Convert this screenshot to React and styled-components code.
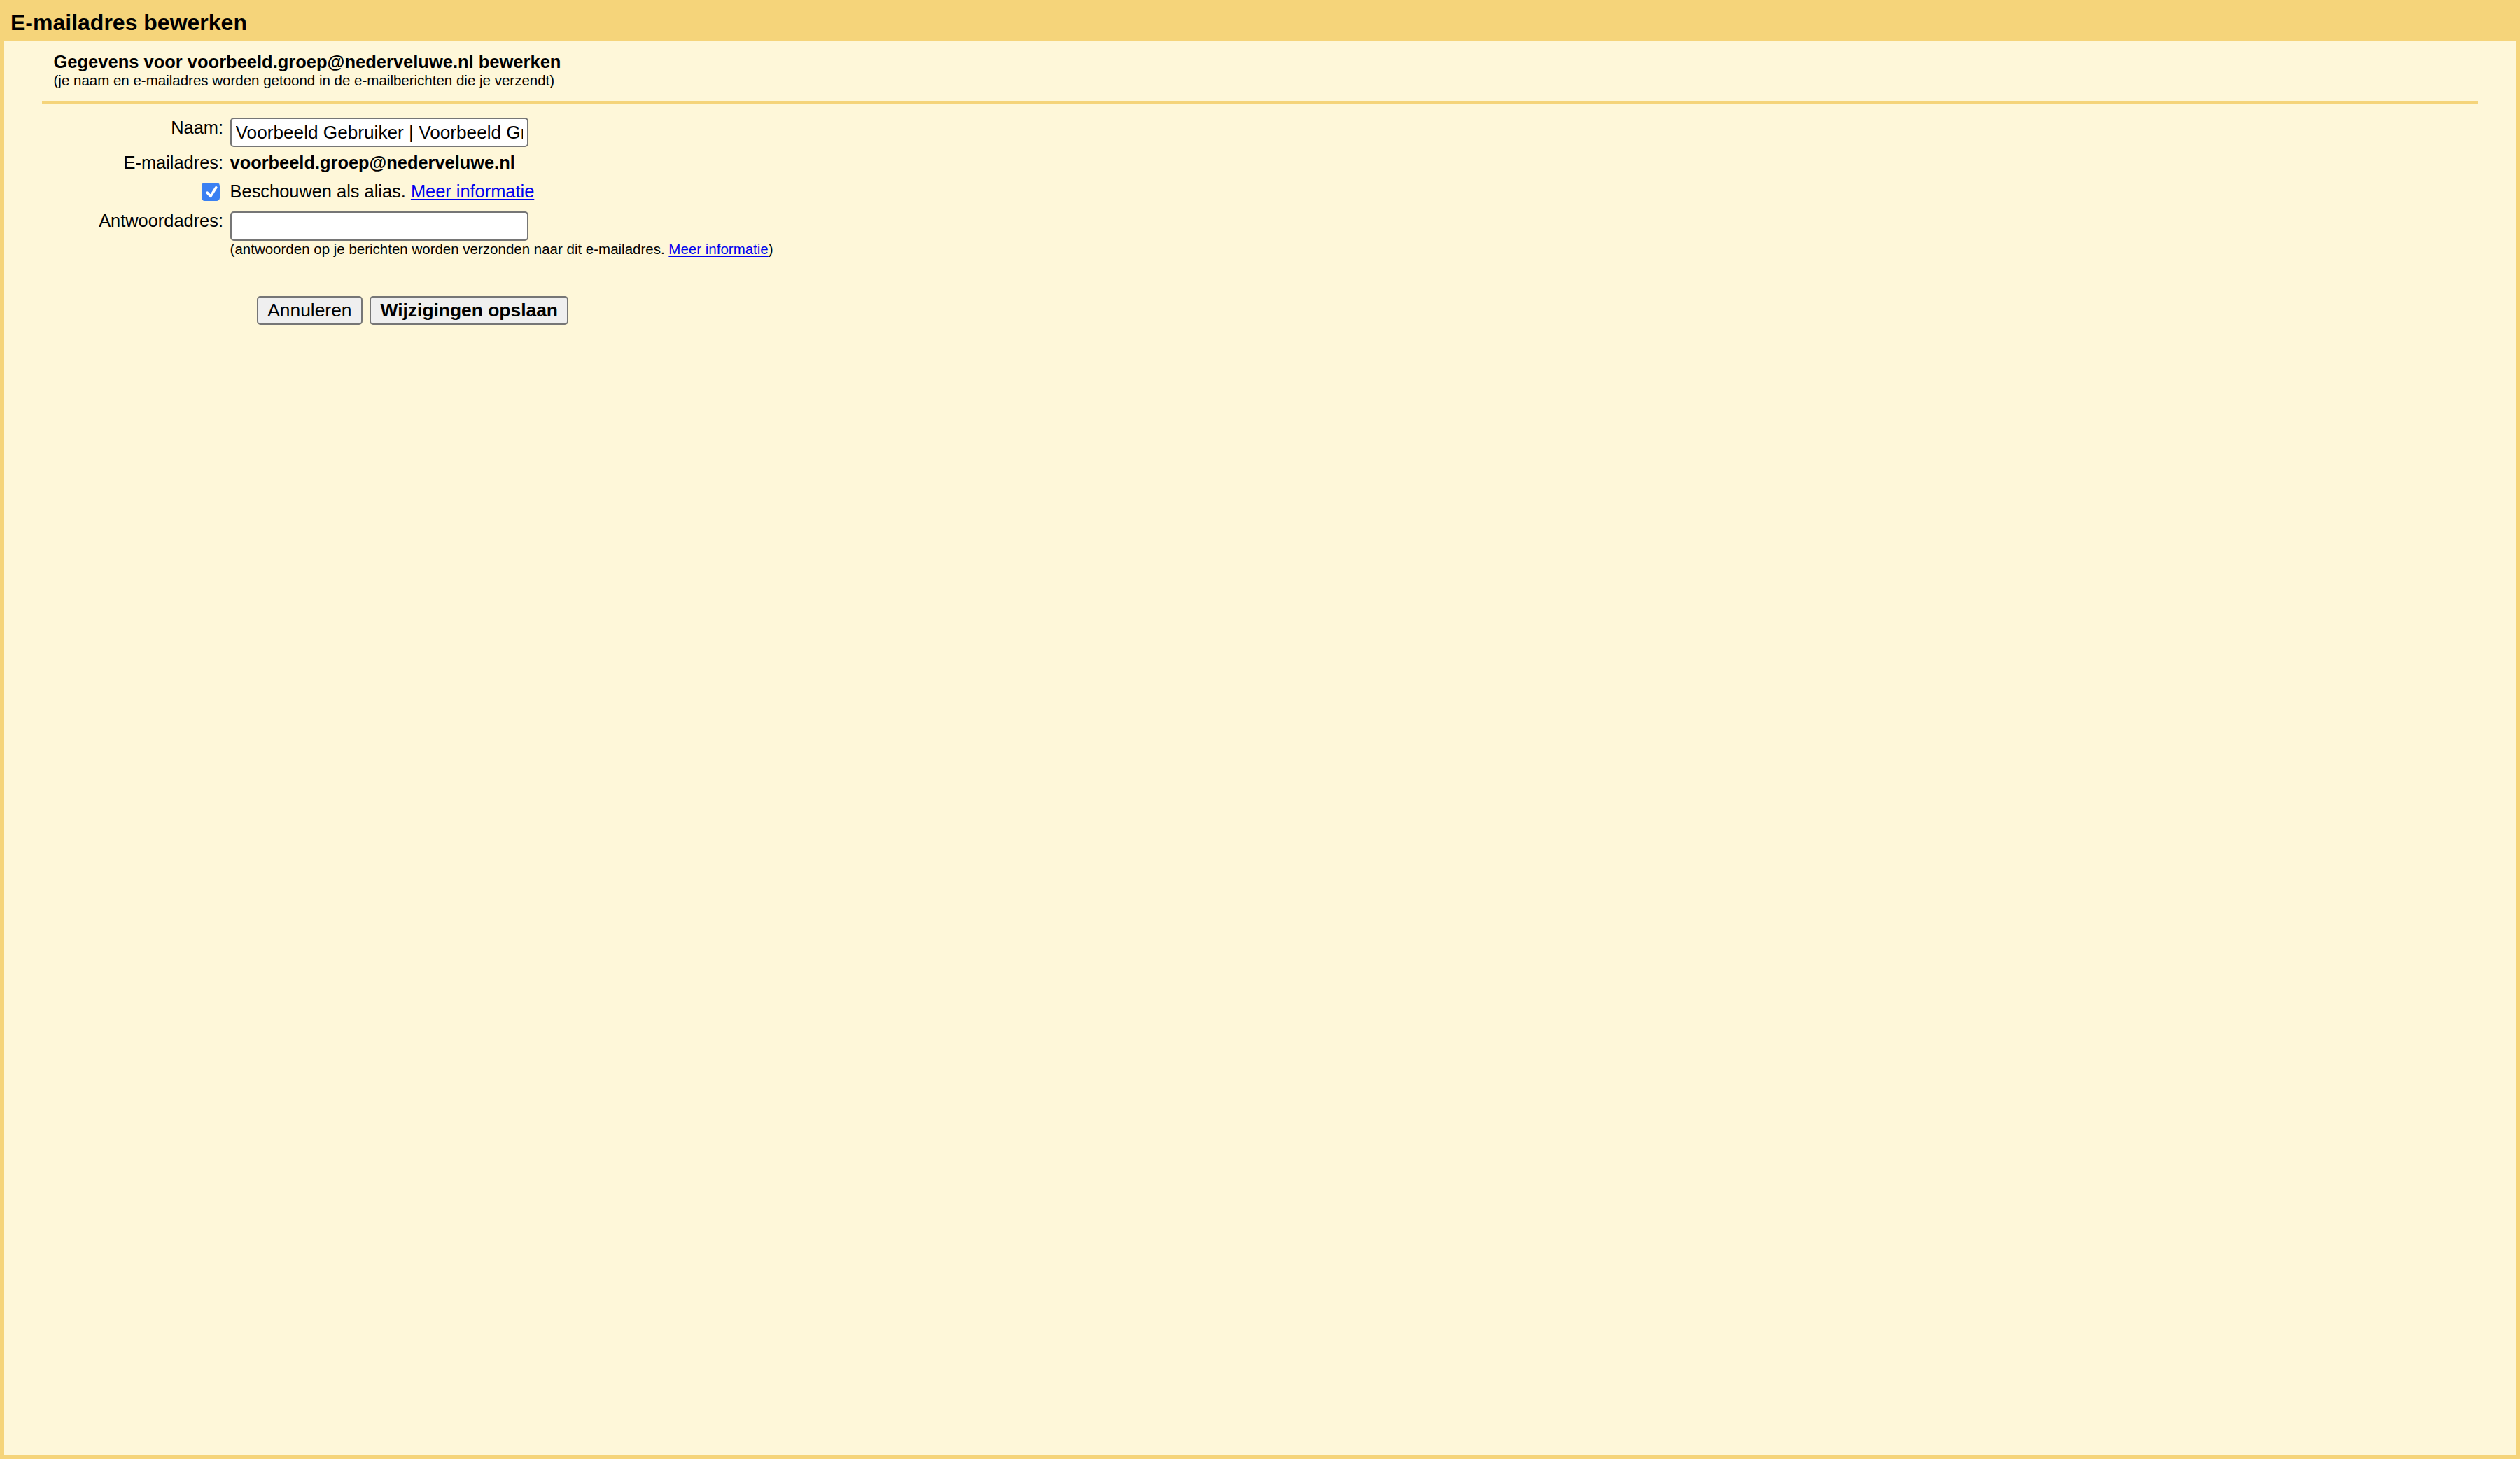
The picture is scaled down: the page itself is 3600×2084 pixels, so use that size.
import React from 'react';
import styled, { createGlobalStyle } from 'styled-components';

const GlobalStyle = createGlobalStyle`
  html, body {
    margin: 0;
    padding: 0;
  }
  body {
    font-family: 'Liberation Sans', Arial, sans-serif;
    color: #000;
  }
`;

const Page = styled.div`
  height: 100vh;
  box-sizing: border-box;
  display: flex;
  flex-direction: column;
  background: #f5d47a;
  padding: 0 6px 6px;
`;

const TitleBar = styled.div`
  height: 59px;
  box-sizing: border-box;
  padding: 13.5px 0 0 9px;
  font-size: 32px;
  font-weight: 700;
`;

const Panel = styled.div`
  flex: 1;
  background: #fef7d9;
  padding: 15px 54px 0;
`;

const Intro = styled.div`
  padding-left: 16.5px;
`;

const IntroTitle = styled.div`
  font-size: 25.5px;
  font-weight: 700;
`;

const SmallText = styled.div`
  font-size: 20.5px;
`;

const Divider = styled.div`
  height: 4px;
  margin-top: 16.6px;
  background: #f5d47a;
`;

const Row = styled.div`
  display: grid;
  grid-template-columns: 259px 1fr;
  column-gap: 9.6px;
  align-items: start;
  margin-top: ${p => p.$top}px;
  font-size: 25.4px;
`;

const Label = styled.div`
  text-align: right;
  margin-top: ${p => p.$offset || 0}px;
`;

const Value = styled.div`
  font-weight: ${p => (p.$bold ? 700 : 400)};
`;

const TextInput = styled.input`
  display: block;
  box-sizing: border-box;
  width: 426px;
  height: 42px;
  margin: ${p => p.$top || 0}px 0 0;
  padding: 0 6px;
  border: 2.3px solid #767676;
  border-radius: 5px;
  background: #fff;
  font-family: 'Liberation Sans', Arial, sans-serif;
  font-size: 26.2px;
  color: #000;
  outline: none;
`;

const CheckCell = styled.div`
  display: flex;
  justify-content: flex-end;
  padding: 2px 5px 0 0;
`;

const CheckBox = styled.span`
  display: block;
  width: 25.7px;
  height: 25.7px;
  border-radius: 4.5px;
  background: #3a80f2;
`;

const Link = styled.a`
  color: #0000ee;
  text-decoration: underline;
  cursor: pointer;
`;

const Hint = styled(SmallText)`
  grid-column: 2;
`;

const Actions = styled.div`
  display: flex;
  gap: 10px;
  margin: 54.7px 0 0 306.7px;
`;

const Button = styled.button`
  box-sizing: border-box;
  height: 41.6px;
  margin: 0;
  padding: 0 13.5px 1px;
  border: 2.3px solid #767676;
  border-radius: 5px;
  background: #efefef;
  font-family: 'Liberation Sans', Arial, sans-serif;
  font-size: 26.4px;
  font-weight: ${p => (p.$primary ? 700 : 400)};
  color: #000;
  cursor: pointer;
`;

const Check = () => (
  <svg width="25.7" height="25.7" viewBox="0 0 25.7 25.7">
    <path
      d="M8.2 14.2 L12.9 19.3 L20.8 6.8"
      fill="none"
      stroke="#fff"
      strokeWidth="3.6"
      strokeLinecap="round"
      strokeLinejoin="round"
    />
  </svg>
);

const App = () => (
  <>
    <GlobalStyle />
    <Page>
      <TitleBar>E-mailadres bewerken</TitleBar>
      <Panel>
        <Intro>
          <IntroTitle>Gegevens voor voorbeeld.groep@nederveluwe.nl bewerken</IntroTitle>
          <SmallText>(je naam en e-mailadres worden getoond in de e-mailberichten die je verzendt)</SmallText>
        </Intro>
        <Divider />

        <Row $top={20.7}>
          <Label>Naam:</Label>
          <Value>
            <TextInput defaultValue="Voorbeeld Gebruiker | Voorbeeld Groep" />
          </Value>
        </Row>

        <Row $top={7.8}>
          <Label>E-mailadres:</Label>
          <Value $bold>voorbeeld.groep@nederveluwe.nl</Value>
        </Row>

        <Row $top={12.4}>
          <CheckCell>
            <CheckBox role="checkbox" aria-checked="true">
              <Check />
            </CheckBox>
          </CheckCell>
          <Value>
            Beschouwen als alias. <Link>Meer informatie</Link>
          </Value>
        </Row>

        <Row $top={12.2}>
          <Label>Antwoordadres:</Label>
          <Value>
            <TextInput $top={1.5} />
          </Value>
          <Hint>
            (antwoorden op je berichten worden verzonden naar dit e-mailadres. <Link>Meer informatie</Link>)
          </Hint>
        </Row>

        <Actions>
          <Button>Annuleren</Button>
          <Button $primary>Wijzigingen opslaan</Button>
        </Actions>
      </Panel>
    </Page>
  </>
);

export default App;
